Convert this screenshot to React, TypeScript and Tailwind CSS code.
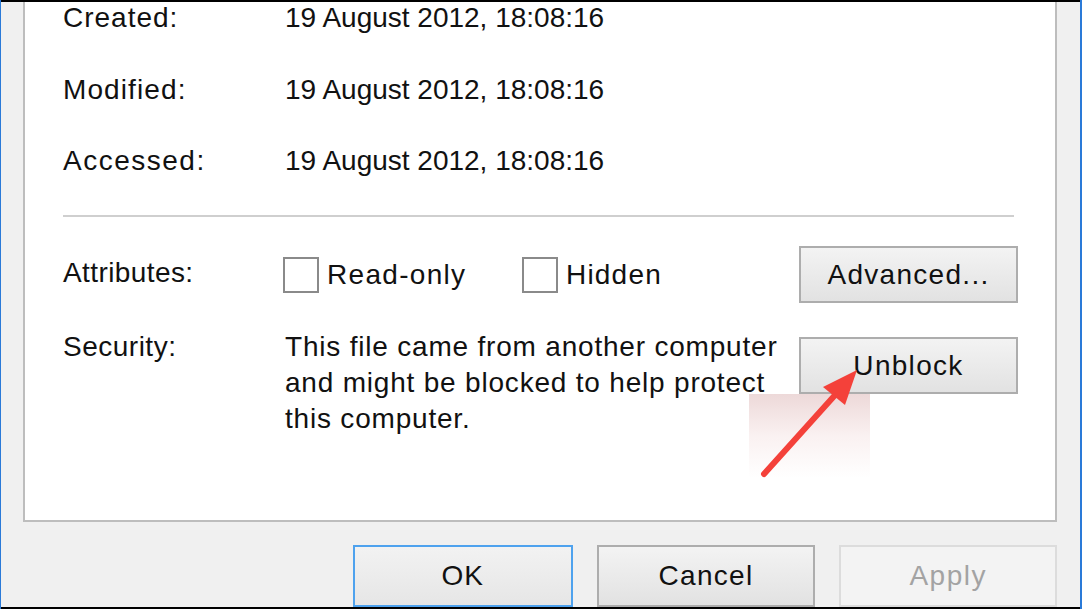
export default function App() {
  const btn =
    'flex items-center justify-center border-2 border-[#adadad] bg-gradient-to-b from-[#f3f3f3] to-[#e2e2e2] text-[28px] text-[#111] tracking-[1.3px]';

  return (
    <div
      className="relative w-[1082px] h-[609px] overflow-hidden bg-black pt-[2px] pb-[2px] pl-[1px] pr-[2px]"
      style={{ fontFamily: '"Liberation Sans", Arial, sans-serif' }}
    >
      <div className="absolute left-0 top-0 h-full w-[1px] bg-[#2a7ad8]" />
      <div className="absolute right-0 top-0 h-full w-[2px] bg-[#2a7ad8]" />

      <div className="h-full bg-[#f0f0f0] pl-[22px] pr-[23px] flex flex-col">
        {/* general tab panel */}
        <div className="h-[522px] bg-white border-l-2 border-r-2 border-b-2 border-[#bdbdbd] pl-[38px] text-[28px] leading-[36px] text-[#111]">
          <div className="flex -mt-[2px]">
            <div className="w-[222px] tracking-[1px]">Created:</div>
            <div>19 August 2012, 18:08:16</div>
          </div>
          <div className="flex mt-[36px]">
            <div className="w-[222px] tracking-[1.1px]">Modified:</div>
            <div>19 August 2012, 18:08:16</div>
          </div>
          <div className="flex mt-[35px]">
            <div className="w-[222px] tracking-[1.5px]">Accessed:</div>
            <div>19 August 2012, 18:08:16</div>
          </div>

          <div className="mt-[36px] h-[2px] w-[951px] bg-[#cfcfcf]" />

          <div className="flex items-center h-[57px] mt-[29px]">
            <div className="w-[220px] -mt-[4px] tracking-[0.4px]">Attributes:</div>
            <div className="flex items-center w-[239px]">
              <div className="w-[36px] h-[36px] border-2 border-[#8a8a8a] bg-white" />
              <span className="ml-[8px] tracking-[1.3px]">Read-only</span>
            </div>
            <div className="flex items-center w-[277px]">
              <div className="w-[36px] h-[36px] border-2 border-[#8a8a8a] bg-white" />
              <span className="ml-[8px] tracking-[1.2px]">Hidden</span>
            </div>
            <div className={`${btn} w-[219px] h-[57px]`}>Advanced...</div>
          </div>

          <div className="flex mt-[26px]">
            <div className="w-[222px] tracking-[0.5px]">Security:</div>
            <div className="w-[514px] whitespace-nowrap tracking-[0.8px]">
              This file came from another computer
              <br />
              and might be blocked to help protect
              <br />
              this computer.
            </div>
            <div className={`${btn} w-[219px] h-[57px] mt-[8px]`}>Unblock</div>
          </div>
        </div>

        <div className="flex gap-[24px] pl-[330px] mt-[23px]">
          <div className="flex items-center justify-center w-[220px] h-[62px] border-2 border-[#4ea2ee] bg-gradient-to-b from-[#f2f2f2] to-[#e6e6e6] text-[28px] text-[#111] tracking-[1px]">
            OK
          </div>
          <div className={`${btn} w-[219px] h-[62px]`}>Cancel</div>
          <div className="flex items-center justify-center w-[218px] h-[62px] border-2 border-[#dcdcdc] bg-[#f3f3f3] text-[28px] text-[#a3a3a3] tracking-[1.5px]">
            Apply
          </div>
        </div>
      </div>

      {/* pixelated blur left around the annotation */}
      <div className="absolute left-[749px] top-[394px] w-[121px] h-[84px] bg-gradient-to-b from-[rgba(215,170,170,0.45)] via-[rgba(235,200,200,0.25)] to-[rgba(255,255,255,0)]" />

      <svg className="absolute left-0 top-0 pointer-events-none" width="1082" height="609">
        <line x1="764" y1="474" x2="836" y2="394" stroke="#f4413a" strokeWidth="6" strokeLinecap="round" />
        <polygon points="857,370 823,387 845,405" fill="#f4413a" />
      </svg>
    </div>
  );
}
